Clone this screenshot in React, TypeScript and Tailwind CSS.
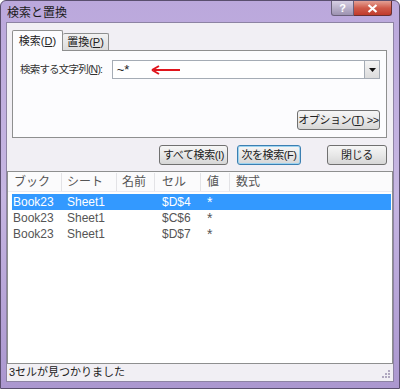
import React from 'react';

const font = { fontFamily: '"Liberation Sans", "Noto Sans CJK JP", sans-serif' };

const rows = [
    { book: 'Book23', sheet: 'Sheet1', name: '', cell: '$D$4', value: '*', selected: true },
    { book: 'Book23', sheet: 'Sheet1', name: '', cell: '$C$6', value: '*', selected: false },
    { book: 'Book23', sheet: 'Sheet1', name: '', cell: '$D$7', value: '*', selected: false },
];

const Button: React.FC<{ label: string; width: string; focused?: boolean }> = ({ label, width, focused }) => (
    <div
        className={`h-[20px] ${width} flex items-center justify-center whitespace-nowrap rounded-[3px] border text-[11px] tracking-[-0.4px] text-[#222] bg-gradient-to-b from-[#f6f6f6] via-[#e8e8e8] to-[#d6d6d6] ${
            focused ? 'border-[#3c7fb1] shadow-[inset_0_0_0_1px_#9cd3f0]' : 'border-[#707070]'
        }`}
    >
        {label}
    </div>
);

export default function App() {
    return (
        <div style={font} className="w-[400px] h-[389px] bg-white overflow-hidden">
            <div className="w-[400px] h-[389px] rounded-t-[6px] border border-[#5a4f6e] bg-gradient-to-b from-[#bba8dc] via-[#c6b6e2] to-[#ab97cf] flex flex-col">
                {/* title bar */}
                <div className="h-[21px] flex items-start">
                    <div className="pl-[6px] pt-[3px] text-[12px] text-[#1a1a1a] flex-1 whitespace-nowrap">検索と置換</div>
                    <div className="flex mr-[7px]">
                        <div className="w-[23px] h-[15px] rounded-bl-[3px] border border-[#6a607a] border-t-0 bg-gradient-to-b from-[#d7cfe4] to-[#9d93b1] flex items-center justify-center text-[11px] font-bold text-white">
                            ?
                        </div>
                        <div className="w-[38px] h-[15px] rounded-br-[3px] border border-l-0 border-[#6a3030] border-t-0 bg-gradient-to-b from-[#e3a095] via-[#cf5a4a] to-[#c03a2b] flex items-center justify-center">
                            <svg width="11" height="9" viewBox="0 0 11 9">
                                <path d="M1.5 1 L9.5 8 M9.5 1 L1.5 8" stroke="white" strokeWidth="2.2" />
                            </svg>
                        </div>
                    </div>
                </div>

                {/* client area */}
                <div className="mx-[5px] mb-[6px] flex-1 border border-[#8d83a3] bg-[#f1eff4] flex flex-col">
                    <div className="px-[5px] pt-[6px]">
                        {/* tabs */}
                        <div className="flex items-end h-[21px]">
                            <div className="h-[21px] w-[51px] border border-b-0 border-[#8e8f8f] bg-[#fcfcfe] rounded-t-[2px] flex items-center justify-center whitespace-nowrap text-[11px] text-[#222] relative top-[1px] z-10">
                                検索(<span className="underline">D</span>)
                            </div>
                            <div className="h-[17px] w-[46px] border border-b-0 border-l-0 border-[#8e8f8f] bg-gradient-to-b from-[#f2f2f2] to-[#dcdcdc] rounded-t-[2px] flex items-center justify-center whitespace-nowrap text-[11px] text-[#222]">
                                置換(<span className="underline">P</span>)
                            </div>
                        </div>
                        {/* tab panel */}
                        <div className="h-[88px] w-[375px] border border-[#8e8f8f] bg-[#fcfcfe] flex flex-col pl-[7px] pr-[6px]">
                            <div className="flex items-center mt-[9px]">
                                <div className="w-[92px] whitespace-nowrap text-[10.5px] tracking-[-0.8px] text-[#333]">
                                    検索する文字列(<span className="underline">N</span>):
                                </div>
                                <div className="h-[19px] w-[269px] border border-[#a5acb5] bg-white flex items-center">
                                    <div className="flex-1 flex items-center pl-[4px] text-[13px] text-[#222]">
                                        <span>~*</span>
                                        <svg className="ml-[22px]" width="30" height="10" viewBox="0 0 30 10">
                                            <path d="M3 5 H29" stroke="#e0141c" strokeWidth="2" />
                                            <path d="M1 5 L8 1 M1 5 L8 9" stroke="#e0141c" strokeWidth="2" />
                                        </svg>
                                    </div>
                                    <div className="w-[15px] h-[17px] border-l border-[#a5acb5] bg-gradient-to-b from-[#f4f4f4] to-[#dcdcdc] flex items-center justify-center">
                                        <svg width="7" height="4" viewBox="0 0 7 4">
                                            <path d="M0 0 H7 L3.5 4 Z" fill="#111" />
                                        </svg>
                                    </div>
                                </div>
                            </div>
                            <div className="flex-1" />
                            <div className="flex justify-end mb-[7px]">
                                <div className="h-[20px] w-[83px] flex items-center justify-center whitespace-nowrap rounded-[3px] border border-[#707070] bg-gradient-to-b from-[#f6f6f6] via-[#e8e8e8] to-[#d6d6d6] text-[11px] tracking-[-0.4px] text-[#222]">
                                    オプション(<span className="underline">T</span>) &gt;&gt;
                                </div>
                            </div>
                        </div>
                        {/* buttons */}
                        <div className="flex justify-end gap-[9px] mt-[7px] pr-[1px]">
                            <Button label="すべて検索(I)" width="w-[69px]" />
                            <Button label="次を検索(F)" width="w-[64px]" focused />
                            <div className="w-[8px]" />
                            <Button label="閉じる" width="w-[60px]" />
                        </div>
                    </div>

                    {/* results list */}
                    <div className="mt-[6px] flex-1 border border-[#8e8f8f] bg-white flex flex-col">
                        <div className="h-[20px] flex items-center whitespace-nowrap text-[12px] text-[#555] bg-[#fbfbfc] border-b border-[#eceaf0]">
                            <div className="w-[54px] pl-[6px] border-r border-[#e3e3e6]">ブック</div>
                            <div className="w-[55px] pl-[5px] border-r border-[#e3e3e6]">シート</div>
                            <div className="w-[38px] pl-[5px] border-r border-[#e3e3e6]">名前</div>
                            <div className="w-[46px] pl-[7px] border-r border-[#e3e3e6]">セル</div>
                            <div className="w-[29px] pl-[6px] border-r border-[#e3e3e6]">値</div>
                            <div className="flex-1 pl-[6px]">数式</div>
                        </div>
                        <div className="mt-[2px] flex flex-col">
                            {rows.map((r, i) => (
                                <div
                                    key={i}
                                    className={`h-[16px] ml-[4px] mr-[1px] flex items-center whitespace-nowrap text-[12px] ${
                                        r.selected ? 'bg-[#3399ff] text-white' : 'text-[#555]'
                                    }`}
                                >
                                    <div className="w-[52px] pl-[1px]">{r.book}</div>
                                    <div className="w-[55px] pl-[3px]">{r.sheet}</div>
                                    <div className="w-[38px]">{r.name}</div>
                                    <div className="w-[46px] pl-[5px]">{r.cell}</div>
                                    <div className="w-[29px] pl-[4px] text-[14px]">{r.value}</div>
                                    <div className="flex-1" />
                                </div>
                            ))}
                        </div>
                    </div>

                    {/* status bar */}
                    <div className="h-[17px] flex items-center pl-[2px] whitespace-nowrap text-[11px] text-[#222] bg-[#f1eff4] relative">
                        3セルが見つかりました
                        <svg className="absolute right-[2px] bottom-[2px]" width="10" height="10" viewBox="0 0 10 10">
                            <rect x="7" y="7" width="2" height="2" fill="#b0a8c0" />
                            <rect x="4" y="7" width="2" height="2" fill="#b0a8c0" />
                            <rect x="7" y="4" width="2" height="2" fill="#b0a8c0" />
                            <rect x="1" y="7" width="2" height="2" fill="#b0a8c0" />
                            <rect x="4" y="4" width="2" height="2" fill="#b0a8c0" />
                            <rect x="7" y="1" width="2" height="2" fill="#b0a8c0" />
                        </svg>
                    </div>
                </div>
            </div>
        </div>
    );
}
